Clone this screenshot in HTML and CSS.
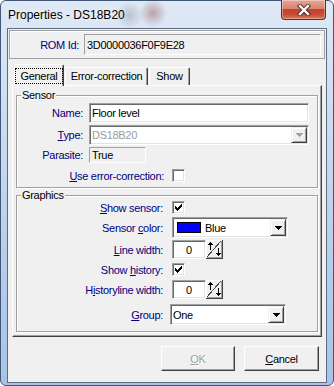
FILE: index.html
```html
<!DOCTYPE html>
<html lang="en">
<head>
    <meta charset="UTF-8">
    <title>Properties - DS18B20</title>
    <link rel="stylesheet" href="styles.css">
</head>
<body>
    <div class="window">
        <div class="titlebar">
            <span class="title">Properties - DS18B20</span>
            <div class="close-btn">
                <svg width="14" height="12" viewBox="0 0 14 12">
                    <path d="M3 2 L11 10 M11 2 L3 10" stroke="#4a2a2a" stroke-width="4.2" stroke-linecap="square"/>
                    <path d="M3 2 L11 10 M11 2 L3 10" stroke="#fff" stroke-width="2.4" stroke-linecap="square"/>
                </svg>
            </div>
        </div>

        <div class="client">
            <div class="rom-panel">
                <span class="lbl rom-lbl">ROM Id:</span>
                <div class="edit readonly rom-edit">3D0000036F0F9E28</div>
            </div>

            <div class="tabs">
                <div class="tab active"><span class="focus">General</span></div>
                <div class="tab tab-err">Error-correction</div>
                <div class="tab tab-show">Show</div>
            </div>

            <div class="tab-page">
                <!-- Sensor -->
                <div class="group sensor">
                    <span class="group-title">Sensor</span>
                    <div class="row">
                        <span class="lbl lbl-s">Name:</span>
                        <div class="edit name-edit">Floor level</div>
                    </div>
                    <div class="row row-type">
                        <span class="lbl lbl-s"><u>T</u>ype:</span>
                        <div class="combo type-combo disabled">
                            <span class="combo-text">DS18B20</span>
                            <span class="drop">
                                <svg width="7" height="4" shape-rendering="crispEdges"><path d="M0 0h7v1H0z M1 1h5v1H1z M2 2h3v1H2z M3 3h1v1H3z" fill="#a0a0a0"/></svg>
                            </span>
                        </div>
                    </div>
                    <div class="row row-parasite">
                        <span class="lbl lbl-s">Parasite:</span>
                        <div class="edit readonly parasite-edit">True</div>
                    </div>
                    <div class="row row-use">
                        <span class="lbl lbl-use"><u>U</u>se error-correction:</span>
                        <span class="check"></span>
                    </div>
                </div>

                <!-- Graphics -->
                <div class="group graphics">
                    <span class="group-title">Graphics</span>
                    <div class="row">
                        <span class="lbl lbl-g"><u>S</u>how sensor:</span>
                        <span class="check">
                            <svg width="7" height="7" shape-rendering="crispEdges"><path d="M6 0h1v1H6z M5 1h2v1H5z M0 2h1v1H0z M4 2h3v1H4z M0 3h2v1H0z M3 3h3v1H3z M0 4h5v1H0z M1 5h3v1H1z M2 6h1v1H2z" fill="#000"/></svg>
                        </span>
                    </div>
                    <div class="row row-color">
                        <span class="lbl lbl-g">Sensor <u>c</u>olor:</span>
                        <div class="combo color-combo">
                            <span class="swatch"></span>
                            <span class="combo-text">Blue</span>
                            <span class="drop">
                                <svg width="7" height="4" shape-rendering="crispEdges"><path d="M0 0h7v1H0z M1 1h5v1H1z M2 2h3v1H2z M3 3h1v1H3z" fill="#000"/></svg>
                            </span>
                        </div>
                    </div>
                    <div class="row row-line">
                        <span class="lbl lbl-g"><u>L</u>ine width:</span>
                        <div class="spin">
                            <div class="edit spin-edit">0</div>
                            <svg class="spin-btn" width="17" height="19" viewBox="0 0 17 19" shape-rendering="crispEdges">
                                <rect width="17" height="19" fill="#f0f0f0"/>
                                <path d="M0 0h16v1H1v17H0z" fill="#fff"/>
                                <path d="M16 0h1v19H0v-1h16z" fill="#404040"/>
                                <path d="M15 1h1v17H1v-1h14z" fill="#a0a0a0"/>
                                <path d="M1 17L15 1" stroke="#505050" stroke-width="1"/>
                                <path d="M4 2h1v1H4z M3 3h3v1H3z M2 4h5v1H2z M4 5h1v5H4z" fill="#000"/>
                                <path d="M12 8h1v5h-1z M10 13h5v1h-5z M11 14h3v1h-3z M12 15h1v1h-1z" fill="#000"/>
                            </svg>
                        </div>
                    </div>
                    <div class="row row-history">
                        <span class="lbl lbl-g">Show <u>h</u>istory:</span>
                        <span class="check">
                            <svg width="7" height="7" shape-rendering="crispEdges"><path d="M6 0h1v1H6z M5 1h2v1H5z M0 2h1v1H0z M4 2h3v1H4z M0 3h2v1H0z M3 3h3v1H3z M0 4h5v1H0z M1 5h3v1H1z M2 6h1v1H2z" fill="#000"/></svg>
                        </span>
                    </div>
                    <div class="row row-hline">
                        <span class="lbl lbl-g">H<u>i</u>storyline width:</span>
                        <div class="spin">
                            <div class="edit spin-edit">0</div>
                            <svg class="spin-btn" width="17" height="19" viewBox="0 0 17 19" shape-rendering="crispEdges">
                                <rect width="17" height="19" fill="#f0f0f0"/>
                                <path d="M0 0h16v1H1v17H0z" fill="#fff"/>
                                <path d="M16 0h1v19H0v-1h16z" fill="#404040"/>
                                <path d="M15 1h1v17H1v-1h14z" fill="#a0a0a0"/>
                                <path d="M1 17L15 1" stroke="#505050" stroke-width="1"/>
                                <path d="M4 2h1v1H4z M3 3h3v1H3z M2 4h5v1H2z M4 5h1v5H4z" fill="#000"/>
                                <path d="M12 8h1v5h-1z M10 13h5v1h-5z M11 14h3v1h-3z M12 15h1v1h-1z" fill="#000"/>
                            </svg>
                        </div>
                    </div>
                    <div class="row row-group">
                        <span class="lbl lbl-g"><u>G</u>roup:</span>
                        <div class="combo group-combo">
                            <span class="combo-text">One</span>
                            <span class="drop">
                                <svg width="7" height="4" shape-rendering="crispEdges"><path d="M0 0h7v1H0z M1 1h5v1H1z M2 2h3v1H2z M3 3h1v1H3z" fill="#000"/></svg>
                            </span>
                        </div>
                    </div>
                </div>
            </div>

            <div class="buttons">
                <div class="btn disabled"><u>O</u>K</div>
                <div class="btn btn-cancel"><u>C</u>ancel</div>
            </div>
        </div>
    </div>
</body>
</html>
```

FILE: styles.css
```css
* {
    margin: 0;
    padding: 0;
    box-sizing: border-box;
}

body {
    width: 334px;
    height: 386px;
    overflow: hidden;
    background: #fff;
    font-family: "Liberation Sans", Arial, sans-serif;
    font-size: 11px;
    letter-spacing: -0.3px;
    color: #000;
}

/* window frame */
.window {
    width: 334px;
    height: 386px;
    padding: 0 6px 2px;
    border: 1px solid #41577a;
    border-radius: 6px;
    background:
        radial-gradient(circle at 152px 12px, rgba(140, 80, 80, 0.45), rgba(140, 80, 80, 0) 14px),
        radial-gradient(circle at 128px 14px, rgba(120, 120, 130, 0.35), rgba(120, 120, 130, 0) 14px),
        linear-gradient(180deg, #dfe9f5 0%, #c9dbef 35%, #b5cde9 70%, #a8c3e5 100%);
}

.titlebar {
    height: 27px;
    display: flex;
    align-items: flex-start;
}

.title {
    margin-left: 1px;
    padding-top: 7px;
    line-height: 14px;
    font-size: 12px;
    letter-spacing: 0;
    text-shadow: 0 0 6px rgba(255, 255, 255, 0.9);
}

.close-btn {
    margin-left: auto;
    margin-top: -1px;
    margin-right: 1px;
    width: 45px;
    height: 20px;
    border: 1px solid #6a2a22;
    border-top: none;
    border-radius: 0 0 4px 4px;
    background: linear-gradient(180deg, #e8a595 0%, #d98371 45%, #c2412a 50%, #c84a32 75%, #d7785e 100%);
    box-shadow: inset 0 0 0 1px rgba(255, 255, 255, 0.35);
    display: flex;
    justify-content: center;
    align-items: center;
}

.client {
    height: 355px;
    border: 1px solid #5b6c84;
    background: #f0f0f0;
}

/* rom id */
.rom-panel {
    margin: 1px 1px 0;
    height: 29px;
    display: flex;
    align-items: center;
    padding-right: 3px;
    border: 1px solid #a0a0a0;
    box-shadow: inset 1px 1px 0 #fff;
}

.rom-lbl {
    width: 69px;
}

.rom-edit {
    margin-left: 5px;
    width: 237px;
    height: 21px;
}

/* labels and controls */
.lbl {
    flex: none;
    text-align: right;
    color: #000080;
}

.row {
    display: flex;
    align-items: center;
}

.edit {
    display: flex;
    align-items: center;
    padding-left: 2px;
    background: #fff;
    border: 1px solid;
    border-color: #a0a0a0 #fff #fff #a0a0a0;
    box-shadow: inset 1px 1px 0 #696969, inset -1px -1px 0 #e3e3e3;
}

.edit.readonly {
    background: #f0f0f0;
    box-shadow: none;
}

.combo {
    display: flex;
    align-items: center;
    padding: 1px;
    background: #fff;
    border: 1px solid;
    border-color: #a0a0a0 #fff #fff #a0a0a0;
    box-shadow: inset 1px 1px 0 #696969, inset -1px -1px 0 #e3e3e3;
}

.combo-text {
    flex: 1;
    padding-left: 1px;
}

.combo.disabled .combo-text {
    color: #9a9a9a;
}

.drop {
    width: 16px;
    height: 100%;
    display: flex;
    justify-content: center;
    align-items: center;
    background: #f0f0f0;
    border: 1px solid;
    border-color: #f0f0f0 #404040 #404040 #f0f0f0;
    box-shadow: inset 1px 1px 0 #fff, inset -1px -1px 0 #a0a0a0;
}

.check {
    flex: none;
    width: 13px;
    height: 13px;
    background: #fff;
    border: 1px solid;
    border-color: #a0a0a0 #fff #fff #a0a0a0;
    box-shadow: inset 1px 1px 0 #696969, inset -1px -1px 0 #e3e3e3;
}

.check svg {
    display: block;
    margin: 2px 0 0 2px;
}

/* tabs */
.tabs {
    margin: 5px 0 0 4px;
    height: 21px;
    display: flex;
    align-items: flex-start;
}

.tab {
    height: 18px;
    margin-top: 3px;
    margin-left: 1px;
    background: #f0f0f0;
    border-top: 1px solid #fff;
    border-left: 1px solid #fff;
    border-right: 1px solid #404040;
    box-shadow: inset -1px 0 0 #a0a0a0;
    border-radius: 2px 2px 0 0;
    text-align: center;
    line-height: 16px;
}

.tab.active {
    position: relative;
    z-index: 1;
    width: 50px;
    height: 22px;
    margin-top: 0;
    margin-left: 2px;
}

.focus {
    display: block;
    width: 48px;
    height: 16px;
    margin-top: 3px;
    line-height: 14px;
    border: 1px dotted #000;
}

.tab-err {
    width: 83px;
    line-height: 17px;
}

.tab-show {
    width: 41px;
    line-height: 17px;
}

.tab-page {
    margin-left: 4px;
    width: 310px;
    height: 252px;
    padding: 9px 0 0 3px;
    border: 1px solid;
    border-color: #fff #404040 #404040 #fff;
    box-shadow: inset -1px -1px 0 #a0a0a0;
}

/* group boxes */
.group {
    position: relative;
    width: 302px;
    border: 1px solid #a0a0a0;
    box-shadow: inset 1px 1px 0 #fff, 1px 1px 0 #fff;
}

.group-title {
    position: absolute;
    top: -7px;
    left: 4px;
    padding: 0 1px;
    line-height: 13px;
    background: #f0f0f0;
}

.sensor {
    height: 93px;
    padding-top: 7px;
}

.lbl-s {
    width: 66px;
    margin-right: 6px;
}

.name-edit {
    width: 220px;
    height: 20px;
}

.row-type {
    margin-top: 2px;
}

.type-combo {
    width: 220px;
    height: 20px;
}

.row-parasite {
    margin-top: 2px;
}

.parasite-edit {
    width: 57px;
    height: 16px;
}

.row-use {
    margin-top: 6px;
}

.lbl-use {
    width: 147px;
    margin-right: 8px;
}

.graphics {
    margin-top: 7px;
    height: 137px;
    padding-top: 5px;
}

.lbl-g {
    width: 146px;
    margin-right: 9px;
}

.row-color {
    margin-top: 3px;
}

.color-combo {
    width: 116px;
    height: 21px;
}

.swatch {
    flex: none;
    width: 24px;
    height: 11px;
    margin-left: 3px;
    margin-right: 3px;
    background: #0000ff;
    border: 1px solid #000;
}

.row-line {
    margin-top: 2px;
}

.spin {
    display: flex;
    height: 19px;
}

.spin-edit {
    width: 34px;
    height: 19px;
    justify-content: center;
    padding-left: 0;
}

.spin-btn {
    display: block;
}

.row-history {
    margin-top: 4px;
}

.row-hline {
    margin-top: 4px;
}

.row-group {
    margin-top: 5px;
}

.group-combo {
    margin-left: -2px;
    width: 116px;
    height: 21px;
}

/* dialog buttons */
.buttons {
    margin-top: 9px;
    padding-right: 7px;
    display: flex;
    justify-content: flex-end;
    gap: 9px;
}

.btn {
    width: 74px;
    height: 25px;
    display: flex;
    justify-content: center;
    align-items: center;
    background: #f0f0f0;
    border: 1px solid;
    border-color: #fff #404040 #404040 #fff;
    box-shadow: inset -1px -1px 0 #a0a0a0;
}

.btn.disabled {
    color: #a0a0a0;
    text-shadow: 1px 1px 0 #fff;
}

.btn-cancel {
    width: 75px;
}
```
